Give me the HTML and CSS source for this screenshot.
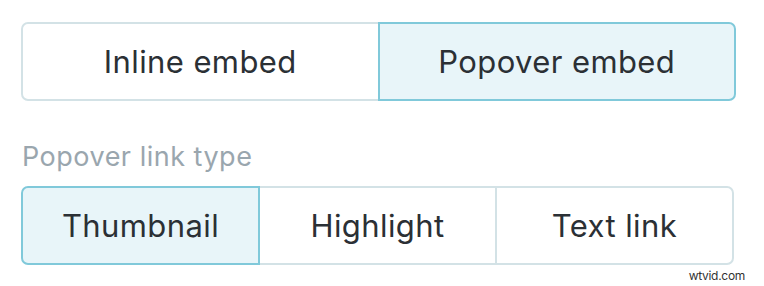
FILE: index.html
```html
<!DOCTYPE html>
<html lang="en">
<head>
    <meta charset="UTF-8">
    <title>Embed options</title>
    <link rel="stylesheet" href="styles.css">
</head>
<body>
    <div class="panel">
        <div class="toggle embed-type">
            <button class="option">Inline embed</button>
            <button class="option active">Popover embed</button>
        </div>

        <div class="label">Popover link type</div>
        <div class="toggle link-type">
            <button class="option active">Thumbnail</button>
            <button class="option">Highlight</button>
            <button class="option">Text link</button>
        </div>
    </div>
    <div class="watermark">wtvid.com</div>
</body>
</html>
```

FILE: styles.css
```css
body {
    margin: 0;
    background: #ffffff;
    font-family: 'Inter', 'Noto Sans', sans-serif;
    color: #2b3035;
}
.panel {
    padding: 22px 0 0 21px;
}
.toggle {
    display: flex;
    height: 79px;
}
.embed-type {
    width: 715px;
}
.link-type {
    width: 713px;
}
.option {
    flex: 1;
    position: relative;
    margin: 0 0 0 -2px;
    padding: 0;
    border: 2px solid #d3e2e6;
    background: white;
    font-family: inherit;
    font-size: 31px;
    letter-spacing: 0.4px;
    color: #2b3035;
    cursor: pointer;
}
.option:first-child {
    margin-left: 0;
    border-radius: 7px 0 0 7px;
}
.option:last-child {
    border-radius: 0 7px 7px 0;
}
.option.active {
    z-index: 1;
    background: #e8f5f9;
    border-color: #80c9da;
}
.label {
    margin: 39px 0 0 1px;
    height: 46px;
    font-size: 27px;
    letter-spacing: 0.5px;
    color: #9aa6ae;
}
.watermark {
    position: absolute;
    right: 19px;
    top: 268px;
    font-size: 12px;
    letter-spacing: -0.3px;
    color: #333;
}
```
